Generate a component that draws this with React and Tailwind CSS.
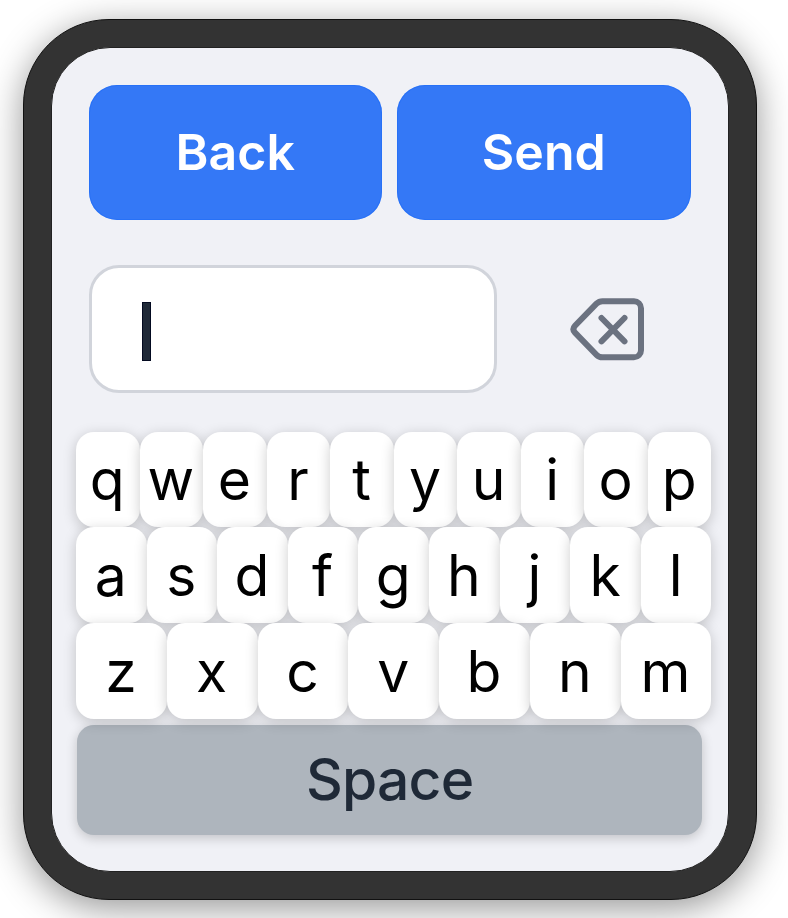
const rows = ['qwertyuiop', 'asdfghjkl', 'zxcvbnm'];

function ActionButton({ children }) {
  return (
    <button className="h-full flex-1 rounded-[28px] bg-[#3478f6] pb-px text-[50px] leading-none font-semibold text-white ring-1 ring-[#1a6af8]/50 ring-inset">
      {children}
    </button>
  );
}

function BackspaceIcon() {
  return (
    <svg width="78" height="66" viewBox="0 0 78 66" fill="none" stroke="#6b7280" strokeWidth="6" strokeLinecap="round" strokeLinejoin="round">
      <path d="M33.5 4.2H65a7 7 0 0 1 7 7V53.3a7 7 0 0 1-7 7H33.5q-3.5 0-6-2.5L6 35.6q-3.2-3.4 0-6.8L27.5 6.7q2.5-2.5 6-2.5Z" />
      <path d="M32.5 21 55.5 44.3M55.5 21 32.5 44.3" />
    </svg>
  );
}

export default function App() {
  return (
    <div className="h-[918px] w-[788px] overflow-hidden bg-white pt-[19px] pl-[23px] font-['Inter',sans-serif]">
      <div className="h-[881px] w-[734px] rounded-[86px] border border-[#111] bg-[#333] p-[27px] shadow-[0_8px_36px_rgba(0,0,0,0.42)]">
        <div className="h-[825px] w-[678px] rounded-[59px] border border-[#222] bg-[#f0f1f6] pt-[36.5px] pl-[24.5px]">
          <div className="ml-[12px] flex h-[135.5px] w-[602px] gap-[15px]">
            <ActionButton>Back</ActionButton>
            <ActionButton>Send</ActionButton>
          </div>
          <div className="mt-[45px] ml-[12px] flex h-[128px] w-[603px] items-center">
            <div className="flex h-[128px] w-[408.5px] items-center rounded-[30px] border-[3px] border-[#d1d4db] bg-white pt-[4px] pl-[50px]">
              <div className="h-[59px] w-[9px] border border-[#030a20] bg-[#1f2937]" />
            </div>
            <button className="mt-[2px] ml-[72px]" aria-label="Delete">
              <BackspaceIcon />
            </button>
          </div>
          <div className="mt-[38.6px] ml-[-0.5px] flex w-[635.5px] flex-col">
            {rows.map((row) => (
              <div key={row} className="flex h-[95.7px]">
                {row.split('').map((letter) => (
                  <button
                    key={letter}
                    className="min-w-0 flex-1 rounded-[18px] bg-white pt-px pr-px text-[57px] leading-none text-black shadow-[0_3px_14px_rgba(0,0,0,0.2)]"
                  >
                    {letter}
                  </button>
                ))}
              </div>
            ))}
          </div>
          <button className="mt-[6px] ml-[0.7px] block h-[110px] w-[625px] rounded-[17px] bg-[#aeb5bd] text-[57px] leading-none font-medium tracking-[-0.8px] text-[#1f2937] shadow-[0_3px_12px_rgba(0,0,0,0.2)]">
            Space
          </button>
        </div>
      </div>
    </div>
  );
}
